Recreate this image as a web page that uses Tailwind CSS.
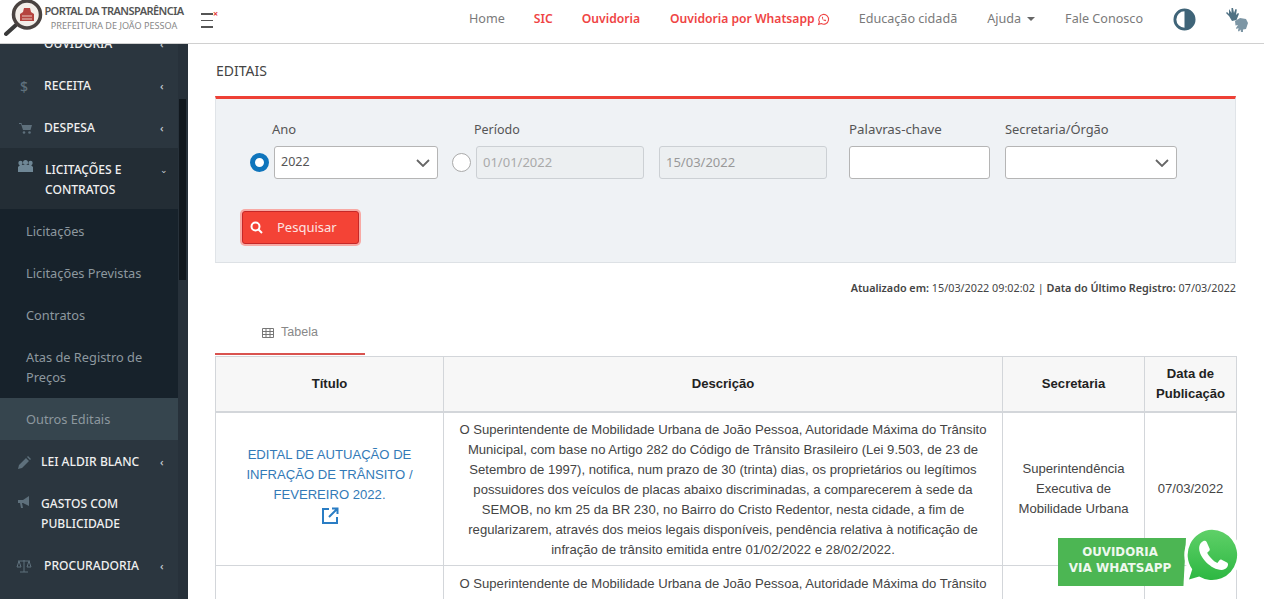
<!DOCTYPE html>
<html lang="pt-BR">
<head>
  <meta charset="UTF-8" />
  <title>Editais - Portal da Transparência</title>
  <script src="https://cdn.jsdelivr.net/npm/@tailwindcss/browser@4"></script>
</head>
<body class="h-[599px] overflow-hidden bg-white font-['Noto_Sans',sans-serif] text-[#333]">
  <!-- Topo -->
  <header class="relative z-10 h-[44px] bg-white border-b border-[#d0d0d0] flex items-center">
    <div class="w-[188px] h-[43px] flex items-start shrink-0 relative">
      <svg class="absolute left-[4px] top-0" width="42" height="37" viewBox="0 0 42 37">
        <line x1="12" y1="25" x2="2" y2="34" stroke="#3a3a3a" stroke-width="4" stroke-linecap="round"/>
        <circle cx="23" cy="14.500" r="13.500" fill="#f3eee9" stroke="#4a4341" stroke-width="3.500"/>
        <path d="M16 21v-7l3-2 1-4h6l1 4 3 2v7z" fill="#b5443f"/>
        <path d="M18 16h10M18 19h10" stroke="#e8c8c0" stroke-width="1"/>
      </svg>
      <div class="ml-[44px] w-[140px] text-center">
        <div class="mt-[3px] text-[11px] leading-[15px] font-semibold text-[#555] tracking-[-0.55px] whitespace-nowrap">PORTAL DA TRANSPARÊNCIA</div>
        <div class="mt-[1px] text-[9.100px] leading-[14px] text-[#888] whitespace-nowrap">PREFEITURA DE JOÃO PESSOA</div>
      </div>
    </div>
    <div class="relative ml-[13px] -mt-[2px] w-[16px] flex flex-col gap-[5px]">
      <span class="h-[1.500px] w-[12px] bg-[#555]"></span>
      <span class="h-[1.500px] w-[12px] bg-[#555]"></span>
      <span class="h-[1.500px] w-[12px] bg-[#555]"></span>
      <span class="absolute left-[12px] top-[-3px] text-[9px] leading-[8px] font-bold text-[#e53935]">×</span>
    </div>
    <nav class="ml-auto -mt-[4px] flex items-center text-[12.600px] text-[#7a7a7a] whitespace-nowrap">
      <a class="mr-[29px]">Home</a>
      <a class="mr-[29px] text-[12.150px] font-semibold text-[#ef4444]">SIC</a>
      <a class="mr-[30px] text-[12.150px] font-semibold text-[#ef4444]">Ouvidoria</a>
      <a class="mr-[29px] text-[12.150px] font-semibold text-[#ef4444] flex items-center gap-[2px]">Ouvidoria por Whatsapp
        <svg width="13" height="13" viewBox="0 0 24 24" fill="none" stroke="#ef4444" stroke-width="2"><path d="M3 21l1.500-5A9 9 0 1 1 8 19.500z"/><path d="M9 8c0 4 3 7 7 7l1-2-3-1-1 1c-1-.500-2-1.500-2.500-2.500l1-1-1-3z" fill="#ef4444" stroke="none"/></svg>
      </a>
      <a class="mr-[30px]">Educação cidadã</a>
      <a class="mr-[30px] flex items-center gap-[6px]">Ajuda <span class="w-0 h-0 border-x-[4px] border-x-transparent border-t-[4px] border-t-[#666]"></span></a>
      <a class="mr-[30px]">Fale Conosco</a>
      <svg class="mr-[30px]" width="23" height="23" viewBox="0 0 24 24"><circle cx="12" cy="12" r="10" fill="#fff" stroke="#3f6478" stroke-width="3"/><path d="M12 2a10 10 0 0 1 0 20z" fill="#3f6478"/></svg>
      <svg class="mr-[16px]" width="22" height="24" viewBox="0 0 22 24" fill="#4f7183">
        <path d="M3 1l2.500 4V0h1.500l1 5 1.500-4 1.300.500L10 7l2-2 1 .800L10.500 12 6 13 3 8 0 5l1-1 2 2z"/>
        <path d="M9 13l5-3 6 1 2 4-2 6-3 .500V24h-2l-.500-2.500-1.500 2-1-.500.500-3-2 1-.500-1 2-3-2.500.500z" fill="#7d96a5"/>
      </svg>
    </nav>
  </header>

  <div class="flex h-[555px]">
    <!-- Menu lateral -->
    <aside class="w-[188px] shrink-0 flex bg-[#2b363f] overflow-hidden">
      <div class="w-[178px] shrink-0 text-[12.100px] font-medium text-[#f0f0f0]">
        <div class="h-[20px] overflow-hidden">
          <a class="-mt-[22px] h-[42px] flex items-center pt-[2px]">
            <span class="w-[44px]"></span>
            <span class="flex-1">OUVIDORIA</span>
            <span class="w-[18px] text-[#c5ccd2] text-[11px]">‹</span>
          </a>
        </div>
        <a class="h-[42px] flex items-center pt-[2px]">
          <span class="w-[44px] pl-[20px] text-[14px] text-[#5e707c]">$</span>
          <span class="flex-1">RECEITA</span>
          <span class="w-[18px] text-[#c5ccd2] text-[11px]">‹</span>
        </a>
        <a class="h-[42px] flex items-center pt-[2px]">
          <svg class="ml-[19px] mr-[12px]" width="13" height="12" viewBox="0 0 13 12" fill="#5e707c"><path d="M0 1h2.500l.500 2h10l-1.500 5H4L2 2H0z"/><circle cx="5" cy="10.500" r="1.300"/><circle cx="10.500" cy="10.500" r="1.300"/></svg>
          <span class="flex-1">DESPESA</span>
          <span class="w-[18px] text-[#c5ccd2] text-[11px]">‹</span>
        </a>
        <a class="h-[61px] flex items-start pt-[12px] bg-[#232d35]">
          <svg class="ml-[17px] mr-[11px]" width="17" height="13" viewBox="0 0 17 13" fill="#6f8796"><circle cx="3.500" cy="3" r="2.200"/><circle cx="8.500" cy="2.500" r="2.500"/><circle cx="13.500" cy="3" r="2.200"/><path d="M1 12V7l2-2h11l2 2v5z"/></svg>
          <span class="flex-1 leading-[20px]">LICITAÇÕES E<br/>CONTRATOS</span>
          <span class="w-[18px] text-[#c5ccd2] text-[9px] leading-[20px]">⌄</span>
        </a>
        <div class="bg-[#17222b] pt-[1px] text-[12.800px] font-normal text-[#8d989f]">
          <a class="h-[42px] flex items-center pl-[26px] pt-[2px]">Licitações</a>
          <a class="h-[42px] flex items-center pl-[26px] pt-[2px]">Licitações Previstas</a>
          <a class="h-[42px] flex items-center pl-[26px] pt-[2px]">Contratos</a>
          <a class="h-[62px] flex items-center pl-[26px] leading-[20px]">Atas de Registro de<br/>Preços</a>
          <a class="h-[42px] flex items-center pl-[26px] pt-[2px] bg-[#36454e]">Outros Editais</a>
        </div>
        <a class="h-[42px] flex items-center pt-[2px]">
          <svg class="ml-[18px] mr-[10px]" width="13" height="13" viewBox="0 0 13 13" fill="#5e707c"><path d="M0 13l1-4 7-7 3 3-7 7zM9 1l1-1 3 3-1 1z"/></svg>
          <span class="flex-1">LEI ALDIR BLANC</span>
          <span class="w-[18px] text-[#c5ccd2] text-[11px]">‹</span>
        </a>
        <a class="h-[62px] flex items-start pt-[12px]">
          <svg class="ml-[18px] mr-[9px] mt-[2px]" width="14" height="13" viewBox="0 0 14 13" fill="#5e707c"><path d="M0 4h5l6-4v10L5 7H4l1 5H3L2 7H0z"/></svg>
          <span class="flex-1 leading-[20px]">GASTOS COM<br/>PUBLICIDADE</span>
        </a>
        <a class="h-[42px] flex items-center pt-[2px]">
          <svg class="ml-[16px] mr-[12px]" width="16" height="14" viewBox="0 0 16 14" fill="none" stroke="#5e707c"><path d="M8 1v12M4 13h8M2 2h12M3 2L1 8h4zM13 2l-2 6h4z"/></svg>
          <span class="flex-1">PROCURADORIA</span>
          <span class="w-[18px] text-[#c5ccd2] text-[11px]">‹</span>
        </a>
      </div>
      <!-- barra de rolagem -->
      <div class="w-[10px] bg-[#27313a]">
        <div class="mt-[55px] ml-[1px] w-[7px] h-[181px] bg-[#11181e]"></div>
      </div>
    </aside>

    <!-- Conteúdo principal -->
    <main class="flex-1 min-w-0 pl-[27px] pr-[28px] overflow-hidden">
      <h1 class="mt-[18px] ml-[1px] text-[14px] leading-[17px] text-[#444]">EDITAIS</h1>

      <!-- Filtros -->
      <section class="mt-[17px] h-[167px] bg-[#eff2f5] border-t-[3px] border-t-[#ee4036] border-x border-b border-x-[#e0e4e8] border-b-[#dde1e5] relative">
        <div class="pt-[22px] pl-[34px] flex items-start">
          <div class="w-[166px] ml-[1px]">
            <label class="block pl-[21px] text-[13px] leading-[16px] text-[#555]">Ano</label>
            <div class="mt-[9px] flex items-center">
              <span class="ml-[-1px] w-[19px] h-[19px] rounded-full bg-white border-[5px] border-[#0f75bc] shrink-0"></span>
              <div class="ml-[5px] w-[164px] h-[33px] shrink-0 bg-white border border-[#b5b5b5] rounded-[3px] flex items-center justify-between pl-[6px] pr-[7px] text-[12.500px] text-[#555]">
                2022
                <svg width="14" height="8" viewBox="0 0 14 8" fill="none" stroke="#666" stroke-width="1.800"><path d="M1 1l6 6 6-6"/></svg>
              </div>
            </div>
          </div>
          <div class="ml-[55px] w-[375px]">
            <label class="block text-[12.500px] leading-[18px] text-[#555] pl-[2px]">Período</label>
            <div class="mt-[7px] flex items-center">
              <span class="ml-[-20px] w-[19px] h-[19px] rounded-full bg-white border border-[#aaa] shrink-0"></span>
              <div class="ml-[5px] w-[168px] h-[33px] bg-[#eceff1] border border-[#ccd0d4] rounded-[3px] flex items-center pl-[6px] text-[13px] text-[#aaa]">01/01/2022</div>
              <div class="ml-[15px] w-[168px] h-[33px] bg-[#eceff1] border border-[#ccd0d4] rounded-[3px] flex items-center pl-[6px] text-[13px] text-[#999]">15/03/2022</div>
            </div>
          </div>
          <div class="ml-[2px] w-[156px]">
            <label class="block text-[13.300px] leading-[16px] text-[#555]">Palavras-chave</label>
            <div class="mt-[9px] w-[141px] h-[33px] bg-white border border-[#b5b5b5] rounded-[3px]"></div>
          </div>
          <div class="w-[172px]">
            <label class="block text-[12.900px] leading-[16px] text-[#555]">Secretaria/Órgão</label>
            <div class="mt-[9px] w-[172px] h-[33px] bg-white border border-[#b5b5b5] rounded-[3px] flex items-center justify-end pr-[7px]">
              <svg width="14" height="8" viewBox="0 0 14 8" fill="none" stroke="#666" stroke-width="1.800"><path d="M1 1l6 6 6-6"/></svg>
            </div>
          </div>
        </div>
        <button class="ml-[26px] mt-[32px] w-[117px] h-[33px] rounded-[3px] bg-[#f44336] border border-[#c62828] ring-[2px] ring-[#f8a9a4] flex items-center pl-[7px] text-[13px] text-[#fde3e1]">
          <svg width="13" height="13" viewBox="0 0 13 13" fill="none" stroke="#fff" stroke-width="2"><circle cx="5.500" cy="5.500" r="4"/><path d="M8.500 8.500l3.500 3.500"/></svg>
          <span class="ml-[14px]">Pesquisar</span>
        </button>
      </section>

      <p class="mt-[17px] text-right text-[10.800px] leading-[16px] text-[#444]"><b class="font-semibold">Atualizado em:</b> 15/03/2022 09:02:02 | <b class="font-semibold">Data do Último Registro:</b> 07/03/2022</p>

      <!-- Aba -->
      <div class="mt-[20px] w-[150px] h-[39px] border-b-2 border-b-[#d9534f] flex items-center justify-center gap-[7px] pb-[4px] font-['Liberation_Sans',sans-serif] text-[12.500px] text-[#888]">
        <svg width="12" height="10" viewBox="0 0 12 10" fill="none" stroke="#777"><path d="M.500.500h11v9H.500zM.500 3.500h11M.500 6.500h11M4 .500v9M8 .500v9"/></svg>
        Tabela
      </div>

      <table class="mt-[1px] w-full table-fixed border-collapse font-['Liberation_Sans',sans-serif] text-[13.100px] leading-[20px] text-[#444]">
        <colgroup><col class="w-[228px]"/><col class="w-[559px]"/><col class="w-[142px]"/><col class="w-[92px]"/></colgroup>
        <thead>
          <tr class="h-[55px] bg-[#f7f7f7] text-[#222] font-bold">
            <th class="border border-[#d3d6da] border-b-2">Título</th>
            <th class="border border-[#d3d6da] border-b-2">Descrição</th>
            <th class="border border-[#d3d6da] border-b-2">Secretaria</th>
            <th class="border border-[#d3d6da] border-b-2">Data de Publicação</th>
          </tr>
        </thead>
        <tbody class="text-center">
          <tr class="h-[154px]">
            <td class="border border-[#d3d6da] px-[12px] pb-[8px] text-[#337ab7]">
              EDITAL DE AUTUAÇÃO DE INFRAÇÃO DE TRÂNSITO / FEVEREIRO 2022.
              <svg class="mx-auto mt-[2px]" width="18" height="18" viewBox="0 0 18 18" fill="none" stroke="#2a7dc4" stroke-width="2"><path d="M8 2H2v14h14v-6M11 1.500h5.500V7M16 2L8 10"/></svg>
            </td>
            <td class="border border-[#d3d6da] px-[12px] pt-[2px]">O Superintendente de Mobilidade Urbana de João Pessoa, Autoridade Máxima do Trânsito Municipal, com base no Artigo 282 do Código de Trânsito Brasileiro (Lei 9.503, de 23 de Setembro de 1997), notifica, num prazo de 30 (trinta) dias, os proprietários ou legítimos possuidores dos veículos de placas abaixo discriminadas, a comparecerem à sede da SEMOB, no km 25 da BR 230, no Bairro do Cristo Redentor, nesta cidade, a fim de regularizarem, através dos meios legais disponíveis, pendência relativa à notificação de infração de trânsito emitida entre 01/02/2022 e 28/02/2022.</td>
            <td class="border border-[#d3d6da] px-[12px]">Superintendência Executiva de Mobilidade Urbana</td>
            <td class="border border-[#d3d6da] px-[8px]">07/03/2022</td>
          </tr>
          <tr class="h-[154px] align-top">
            <td class="border border-[#d3d6da]"></td>
            <td class="border border-[#d3d6da] px-[12px] pt-[8px]">O Superintendente de Mobilidade Urbana de João Pessoa, Autoridade Máxima do Trânsito Municipal, com base no Artigo 282 do Código de Trânsito Brasileiro (Lei 9.503, de 23 de Setembro de 1997)</td>
            <td class="border border-[#d3d6da]"></td>
            <td class="border border-[#d3d6da]"></td>
          </tr>
        </tbody>
      </table>
    </main>
  </div>

  <!-- Selo flutuante WhatsApp -->
  <div class="fixed left-[1058px] top-[528px] w-[186px] h-[60px]">
    <div class="absolute left-0 top-[10px] w-[128px] h-[48px] bg-[#4cb653] flex flex-col items-center justify-center pr-[4px] pb-[4px] font-['DejaVu_Sans',sans-serif] font-bold leading-[16px] text-[#eef8ee] [clip-path:polygon(0_0,100%_0,98%_100%,0_100%)]">
      <span class="text-[11.800px]">OUVIDORIA</span>
      <span class="text-[12px] whitespace-nowrap">VIA WHATSAPP</span>
    </div>
    <svg class="absolute left-[123px] -top-[3px]" width="62" height="62" viewBox="0 0 58 58">
      <defs><linearGradient id="wa" x1="0" y1="0" x2="0" y2="1"><stop offset="0" stop-color="#5fd068"/><stop offset="1" stop-color="#2db742"/></linearGradient></defs>
      <path d="M29 1a27 27 0 1 1-13 50.600L3 55l4-13A27 27 0 0 1 29 1z" fill="#fff"/>
      <path d="M29 4.500a23.500 23.500 0 1 1-12 43.700L7.500 51l3-9.500A23.500 23.500 0 0 1 29 4.500z" fill="url(#wa)"/>
      <path d="M21 15c-2 1-4 3-4 7 0 8 11 20 21 20 4 0 6-3 6-5 0-1-.500-2-1-2l-5-2.500c-1-.500-1.500 0-2 .500l-2 2.500c-3-1-8-6-9.500-9.500l2-2c.500-.500.500-1.500.200-2L24 16c-.500-1-2-1.500-3-1z" fill="#fff"/>
    </svg>
  </div>
</body>
</html>
